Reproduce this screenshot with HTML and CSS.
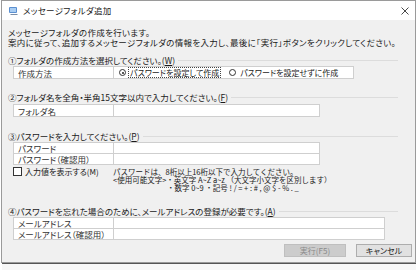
FILE: index.html
```html
<!DOCTYPE html>
<html lang="ja">
<head>
<meta charset="utf-8">
<link rel="stylesheet" href="styles.css">
</head>
<body>
<div class="window">
  <div class="titlebar">
    <svg class="appicon" width="11" height="11" viewBox="0 0 11 11">
      <rect x="1" y="2" width="8" height="6" rx="1" fill="#5b8fd0"/>
      <rect x="2" y="3" width="6" height="4" fill="#a9cdf2"/>
      <path d="M3 9 L10 9 L9 10 L2 10 Z" fill="#7a8ea8"/>
    </svg>
    <span class="title">メッセージフォルダ追加</span>
    <svg class="close" width="8" height="8" viewBox="0 0 8 8">
      <path d="M0.5 0.5 L7.5 7.5 M7.5 0.5 L0.5 7.5" stroke="#333" stroke-width="0.9"/>
    </svg>
  </div>
  <div class="client">
    <p class="intro">メッセージフォルダの作成を行います。<br>案内に従って、追加するメッセージフォルダの情報を入力し、最後に「実行」ボタンをクリックしてください。</p>

    <div class="legend l1"><span>①フォルダの作成方法を選択してください。(<u>W</u>)</span></div>
    <table class="form f1">
      <tr>
        <td class="lbl">作成方法</td>
        <td class="radios">
          <span class="radio on"><span class="dot"></span><span class="focus">パスワードを設定して作成</span></span>
          <span class="radio"><span class="dot"></span><span class="rtext">パスワードを設定せずに作成</span></span>
        </td>
      </tr>
    </table>

    <div class="legend l2"><span>②フォルダ名を全角・半角15文字以内で入力してください。(<u>F</u>)</span></div>
    <table class="form f2">
      <tr><td class="lbl">フォルダ名</td><td class="inp"></td></tr>
    </table>

    <div class="legend l3"><span>③パスワードを入力してください。(<u>P</u>)</span></div>
    <table class="form f3">
      <tr><td class="lbl">パスワード</td><td class="inp"></td></tr>
      <tr><td class="lbl">パスワード（確認用）</td><td class="inp"></td></tr>
    </table>
    <div class="pwopts">
      <div class="check"><span class="box"></span><span>入力値を表示する(M)</span></div>
      <div class="hint">
        <div>パスワードは、8桁以上16桁以下で入力してください。</div>
        <div>&lt;使用可能文字&gt;・英文字 A~Z a~z （大文字小文字を区別します）</div>
        <div class="ind">・数字 0~9 ・記号 ! / = + : # , @ $ - % . _</div>
      </div>
    </div>

    <div class="legend l4"><span>④パスワードを忘れた場合のために、メールアドレスの登録が必要です。(<u>A</u>)</span></div>
    <table class="form f4">
      <tr><td class="lbl">メールアドレス</td><td class="inp"></td></tr>
      <tr><td class="lbl">メールアドレス（確認用）</td><td class="inp"></td></tr>
    </table>

    <div class="buttons">
      <div class="btn disabled">実行(F5)</div>
      <div class="btn">キャンセル</div>
    </div>
  </div>
</div>
<div class="below"></div>
</body>
</html>
```

FILE: styles.css
```css
html, body {
  margin: 0;
  padding: 0;
  background: #ffffff;
}
body {
  font-family: "Noto Sans CJK JP", sans-serif;
  font-size: 8.5px;
  color: #1a1a1a;
  font-feature-settings: "palt";
}
.window {
  margin-left: 1px;
  width: 415px;
  height: 263px;
  box-sizing: border-box;
  border: 1px solid #9a9a9a;
  background: #f0f0f0;
}
.titlebar {
  height: 19px;
  background: #ffffff;
  display: flex;
  align-items: center;
  padding-left: 6px;
  padding-right: 5px;
}
.appicon { margin-right: 4px; }
.title {
  font-size: 8.5px;
  letter-spacing: 0.3px;
  flex: 1;
  line-height: 19px;
}
.close { margin-right: 1px; }
.client {
  padding: 0 0 0 6px;
}
.intro {
  margin: 0;
  padding-top: 7px;
  line-height: 10px;
  letter-spacing: 0.3px;
}
.legend {
  display: flex;
  align-items: center;
  width: 390px;
  line-height: 10px;
  white-space: nowrap;
}
.legend::after {
  content: "";
  flex: 1;
  height: 1px;
  background: #dcdcdc;
  margin-left: 3px;
}
.legend u { text-decoration: underline; }
.l1 { margin-top: 8px; }
.l2 { margin-top: 13px; }
.l3 { margin-top: 14px; }
.l4 { margin-top: 14px; }
.form {
  border-collapse: collapse;
  margin-left: 5px;
}
.form td {
  border: 1px solid #cfcfcf;
  background: #ffffff;
  padding: 0 0 0 4px;
  line-height: 10px;
  white-space: nowrap;
}
.form .lbl {
  width: 95px;
  color: #333;
}
.f1 { margin-top: 1px; }
.f1 td { height: 11px; }
.f1 .radios { width: 234px; padding-left: 5px; font-size: 8px; }
.f2 { margin-top: 2px; }
.f2 td { height: 11px; }
.f2 .inp { width: 201px; }
.f3 { margin-top: 1px; }
.f3 td { height: 10px; }
.f3 .inp { width: 201px; }
.f4 { margin-top: 1px; }
.f4 td { height: 10px; }
.f4 .inp { width: 266px; }
.radio {
  display: inline-flex;
  align-items: center;
  vertical-align: middle;
}
.radio + .radio { margin-left: 6px; }
.dot {
  width: 7px;
  height: 7px;
  border: 1px solid #333;
  border-radius: 50%;
  box-sizing: border-box;
  margin-right: 2px;
  position: relative;
}
.radio.on .dot::after {
  content: "";
  position: absolute;
  left: 1.5px;
  top: 1.5px;
  width: 2px;
  height: 2px;
  border-radius: 50%;
  background: #222;
}
.focus {
  border: 1px dotted #444;
  padding: 0 1px;
  line-height: 9px;
}
.rtext { padding: 0 2px; }
.pwopts {
  display: flex;
  margin-top: 2px;
  margin-left: 5px;
}
.check {
  width: 100px;
  display: flex;
  align-items: flex-start;
  line-height: 10px;
  font-size: 8px;
}
.box {
  width: 9px;
  height: 9px;
  box-sizing: border-box;
  border: 1px solid #333;
  background: #fff;
  margin-right: 3px;
}
.hint {
  margin-top: 1px;
  font-size: 7.5px;
  line-height: 8px;
  font-feature-settings: normal;
  white-space: nowrap;
}
.hint .ind { padding-left: 54px; }
.buttons {
  display: flex;
  justify-content: flex-end;
  gap: 10px;
  margin-top: 4px;
  padding-right: 3px;
}
.btn {
  height: 13px;
  box-sizing: border-box;
  border: 1px solid #adadad;
  background: #e1e1e1;
  width: 56px;
  text-align: center;
  line-height: 11px;
  font-size: 8px;
}
.btn.disabled {
  width: 62px;
  background: #cccccc;
  border-color: #bfbfbf;
  color: #8a8a8a;
}
.below {
  height: 7px;
  margin-left: 2px;
  width: 414px;
  border-top: 1px solid #555;
  background: #f7f7f7;
}
```
